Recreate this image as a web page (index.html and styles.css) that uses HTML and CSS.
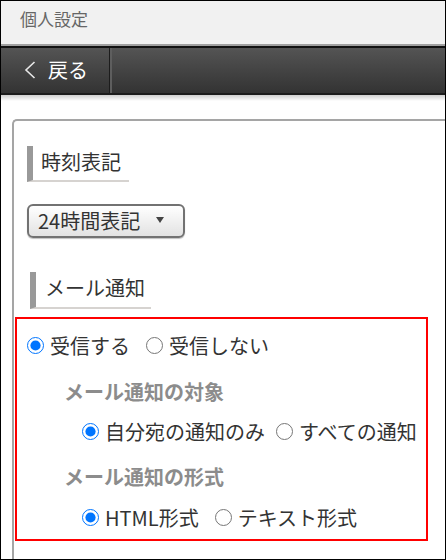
FILE: index.html
```html
<!DOCTYPE html>
<html lang="ja">
<head>
    <meta charset="UTF-8">
    <meta name="viewport" content="width=device-width, initial-scale=1.0">
    <title>個人設定</title>
    <link rel="stylesheet" href="styles.css">
</head>
<body>

    <div class="screen">
        <header class="title-bar">個人設定</header>

        <nav class="tool-bar">
            <button class="back-btn">
                <svg class="back-icon" width="12" height="18" viewBox="0 0 12 18">
                    <polyline points="10.5,1 2,9 10.5,17" fill="none" stroke="#e8e8e8" stroke-width="1.6"/>
                </svg>
                戻る
            </button>
            <span class="tool-sep"></span>
        </nav>
        <div class="tool-shadow"></div>

        <section class="panel">
            <h2 class="sec-head">時刻表記</h2>
            <div>
                <button class="select-btn">24時間表記<span class="caret"></span></button>
            </div>

            <h2 class="sec-head sec-head-mail">メール通知</h2>

            <div class="mail-box">
                <div class="radio-row">
                    <label class="opt opt-wide"><input type="radio" name="mail" checked>受信する</label>
                    <label class="opt"><input type="radio" name="mail">受信しない</label>
                </div>

                <h3 class="sub-head">メール通知の対象</h3>
                <div class="radio-row radio-sub">
                    <label class="opt"><input type="radio" name="target" checked>自分宛の通知のみ</label>
                    <label class="opt"><input type="radio" name="target">すべての通知</label>
                </div>

                <h3 class="sub-head sub-head-format">メール通知の形式</h3>
                <div class="radio-row radio-sub radio-last">
                    <label class="opt opt-wide"><input type="radio" name="format" checked>HTML形式</label>
                    <label class="opt"><input type="radio" name="format">テキスト形式</label>
                </div>
            </div>
        </section>
    </div>

</body>
</html>
```

FILE: styles.css
```css
body {
    margin: 0;
    font-family: "Noto Sans CJK JP", "Noto Sans", sans-serif;
    color: #333;
    background-color: #fff;
}

.screen {
    width: 446px;
    height: 560px;
    box-sizing: border-box;
    border: 1px solid #000;
    overflow: hidden;
}

/* top title */
.title-bar {
    height: 36px;
    padding: 0 0 7px 19px;
    line-height: 36px;
    font-size: 17px;
    color: #666;
    background-color: #f1f1f1;
    border-bottom: 2px solid #a0a0a0;
}

/* dark toolbar */
.tool-bar {
    display: flex;
    height: 45px;
    border-top: 2px solid #111;
    border-bottom: 2px solid #1c1c1c;
    background: linear-gradient(#545454, #333);
}

.back-btn {
    display: flex;
    align-items: center;
    width: 108px;
    padding: 0 0 2px 23px;
    border: none;
    background: none;
    color: #fff;
    font-family: inherit;
    font-size: 20px;
    cursor: pointer;
}

.back-icon {
    margin-right: 12px;
}

.tool-sep {
    width: 2px;
    border-left: 1px solid #1c1c1c;
    background-color: #5e5e5e;
}

.tool-shadow {
    height: 6px;
    background: linear-gradient(#cfcfcf, #fff);
}

/* settings panel */
.panel {
    margin: 18px -20px 0 11px;
    padding: 25px 0 0 13px;
    height: 500px;
    border-top: 2px solid #a5a5a5;
    border-left: 2px solid #a5a5a5;
    border-top-left-radius: 5px;
}

.sec-head {
    display: inline-block;
    height: 34px;
    margin: 0;
    padding: 0 8px 0 8px;
    line-height: 32px;
    font-size: 20px;
    font-weight: normal;
    color: #333;
    border-left: 6px solid #999;
    border-bottom: 2px solid #d6d3d0;
}

.sec-head-mail {
    margin: 34px 0 0 3px;
    height: 35px;
    padding-left: 9px;
    padding-right: 6px;
}

.select-btn {
    display: flex;
    align-items: center;
    width: 158px;
    height: 34px;
    margin-top: 22px;
    padding: 0 0 2px 9px;
    border: 2px solid #727272;
    border-radius: 6px;
    background: linear-gradient(#fff, #e2e2e2);
    box-shadow: 0 1px 1px rgba(0, 0, 0, 0.25);
    font-family: inherit;
    font-size: 20px;
    color: #333;
    cursor: pointer;
}

.caret {
    margin-left: 16px;
    border-top: 6px solid #444;
    border-left: 4.5px solid transparent;
    border-right: 4.5px solid transparent;
}

/* mail notification group */
.mail-box {
    width: 413px;
    height: 224px;
    box-sizing: border-box;
    margin: 8px 0 0 -12px;
    padding: 11px 0 0 10px;
    border: 2px solid #f00;
}

.radio-row {
    display: flex;
    align-items: center;
    height: 30px;
    white-space: nowrap;
}

.radio-sub {
    margin: 8px 0 0 55px;
}

.radio-last {
    margin-top: 9px;
}

.opt {
    display: flex;
    flex-shrink: 0;
    align-items: center;
    margin-right: 11px;
    font-size: 20px;
    color: #333;
}

.opt-wide {
    margin-right: 16px;
}

.opt input {
    width: 17px;
    height: 17px;
    margin: 0 6px 0 0;
}

.sub-head {
    height: 30px;
    margin: 18px 0 0 37px;
    line-height: 28px;
    font-size: 20px;
    font-weight: bold;
    color: #8c8c8c;
}

.sub-head-format {
    margin-top: 17px;
}
```
